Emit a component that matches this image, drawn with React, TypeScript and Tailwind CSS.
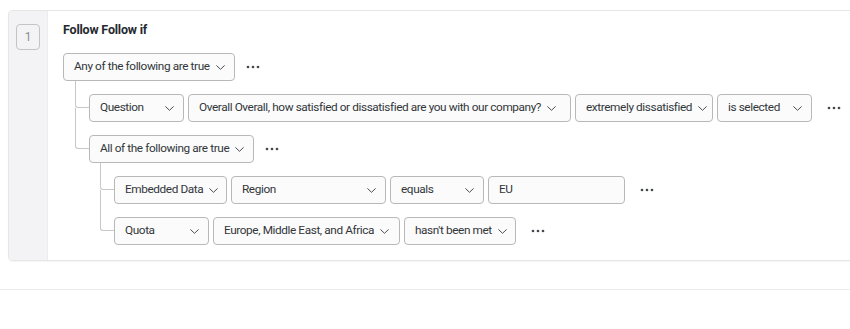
import React from 'react';

const Chevron: React.FC = () => (
  <svg width="9" height="5" viewBox="0 0 9 5" className="shrink-0">
    <path d="M0.7 0.7l3.8 3.6 3.8-3.6" fill="none" stroke="#4a4d52" strokeWidth="1" strokeLinecap="round" strokeLinejoin="round" />
  </svg>
);

const Dots: React.FC = () => (
  <svg width="14" height="4" viewBox="0 0 14 4" className="ml-[11px] shrink-0">
    <circle cx="2" cy="2" r="1.35" fill="#44474c" />
    <circle cx="7" cy="2" r="1.35" fill="#44474c" />
    <circle cx="12" cy="2" r="1.35" fill="#44474c" />
  </svg>
);

type BoxProps = { label: string; width: string; chevron?: boolean; tight?: boolean };

const Box: React.FC<BoxProps> = ({ label, width, chevron = true, tight = false }) => (
  <div
    className={`${width} h-[28px] shrink-0 flex items-center rounded-[4px] border border-[#b8b8b8] bg-[#fbfbfb] pl-[10px] pr-[9px] ${
      tight ? 'gap-[6px]' : 'justify-between'
    }`}
  >
    <span className="whitespace-nowrap">{label}</span>
    {chevron && <Chevron />}
  </div>
);

const Connector: React.FC<{ last?: boolean }> = ({ last }) => (
  <>
    <span className="absolute left-[-14px] top-[-13px] h-[27px] w-[14px] border-l border-b border-[#c8c8c8] rounded-bl-[3px]" />
    {!last && <span className="absolute left-[-14px] top-[14px] bottom-[-13px] border-l border-[#c8c8c8]" />}
  </>
);

const App: React.FC = () => {
  return (
    <div
      className="w-[850px] h-[329px] overflow-hidden bg-white text-[#32363a] text-[11.8px] tracking-[-0.4px]"
      style={{ fontFamily: 'Roboto, "Liberation Sans", sans-serif' }}
    >
      <div className="pt-[10px] pl-[8px]">
        <div className="w-[860px] flex rounded-[4px] border border-[#e6e6e6] shadow-[0_1px_1px_rgba(0,0,0,0.04)]">
          <div className="w-[39px] shrink-0 bg-[#f3f3f5] border-r border-[#ececec] rounded-l-[4px] pt-[13px] pl-[7px]">
            <div className="w-[24px] h-[26px] flex items-center justify-center rounded-[4px] border border-[#c4c4c4] text-[#8a8d91] text-[12px]">
              1
            </div>
          </div>
          <div className="pl-[15px] pt-[9px] pb-[15px]">
            <div className="h-[20px] flex items-center font-bold text-[12.5px] tracking-[-0.2px] text-[#262a2e]">Follow Follow if</div>

            <div className="mt-[13px]">
              <div className="flex items-center">
                <Box label="Any of the following are true" width="w-[172px]" tight />
                <Dots />
              </div>

              <div className="pl-[26px] flex flex-col gap-[13px] mt-[13px]">
                <div className="relative flex items-center gap-[4px]">
                  <Connector />
                  <Box label="Question" width="w-[95px]" />
                  <Box label="Overall Overall, how satisfied or dissatisfied are you with our company?" width="w-[383px]" tight />
                  <Box label="extremely dissatisfied" width="w-[138px]" tight />
                  <Box label="is selected" width="w-[95px]" />
                  <Dots />
                </div>

                <div className="relative">
                  <Connector last />
                  <div className="flex items-center">
                    <Box label="All of the following are true" width="w-[165px]" tight />
                    <Dots />
                  </div>

                  <div className="pl-[25px] flex flex-col gap-[13px] mt-[13px]">
                    <div className="relative flex items-center gap-[4px]">
                      <Connector />
                      <Box label="Embedded Data" width="w-[113px]" tight />
                      <Box label="Region" width="w-[155px]" />
                      <Box label="equals" width="w-[94px]" />
                      <Box label="EU" width="w-[137px]" chevron={false} />
                      <Dots />
                    </div>
                    <div className="relative flex items-center gap-[4px]">
                      <Connector last />
                      <Box label="Quota" width="w-[95px]" />
                      <Box label="Europe, Middle East, and Africa" width="w-[187px]" tight />
                      <Box label="hasn't been met" width="w-[112px]" tight />
                      <Dots />
                    </div>
                  </div>
                </div>
              </div>
            </div>
          </div>
        </div>
      </div>
      <div className="mt-[28px] border-t border-[#ececec]" />
    </div>
  );
};

export default App;
